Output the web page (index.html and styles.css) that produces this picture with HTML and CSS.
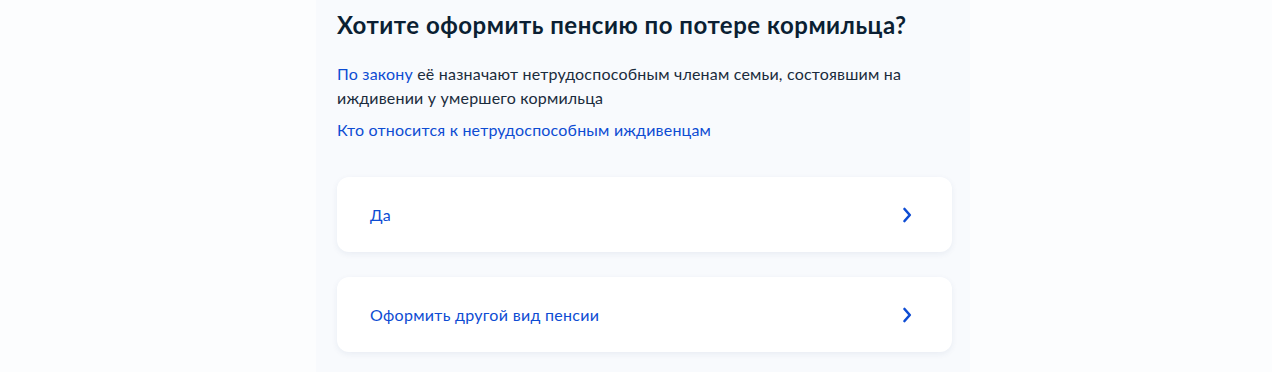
FILE: index.html
```html
<!DOCTYPE html>
<html lang="ru">
<head>
<meta charset="utf-8">
<link rel="stylesheet" href="styles.css">
</head>
<body>
<div class="page">
  <main class="column">
    <h1 class="title">Хотите оформить пенсию по потере кормильца?</h1>
    <p class="text"><a class="link" href="#">По закону</a> её назначают нетрудоспособным членам семьи, состоявшим на иждивении у умершего кормильца</p>
    <p class="text more"><a class="link" href="#">Кто относится к нетрудоспособным иждивенцам</a></p>
    <div class="options">
      <a class="card" href="#"><span class="card-label">Да</span>
        <svg class="chev" width="10" height="18" viewBox="0 0 10 18"><path d="M2.5 3 L7.8 9 L2.5 15" fill="none" stroke="#0d4cd3" stroke-width="2.6" stroke-linecap="round" stroke-linejoin="round"/></svg>
      </a>
      <a class="card" href="#"><span class="card-label">Оформить другой вид пенсии</span>
        <svg class="chev" width="10" height="18" viewBox="0 0 10 18"><path d="M2.5 3 L7.8 9 L2.5 15" fill="none" stroke="#0d4cd3" stroke-width="2.6" stroke-linecap="round" stroke-linejoin="round"/></svg>
      </a>
    </div>
  </main>
</div>
</body>
</html>
```
FILE: styles.css
```css
* { box-sizing: border-box; }
html, body { margin: 0; padding: 0; }
body {
  background: #fcfdfe;
  font-family: Lato, "Noto Sans", sans-serif;
  color: #0b1f33;
}
.page {
  display: flex;
  min-height: 372px;
}
.column {
  margin-left: 316px;
  width: 654px;
  padding: 9px 18px 0 21px;
  background: #f8fafd;
  min-height: 372px;
}
.title {
  margin: 0;
  font-size: 24px;
  line-height: 32px;
  font-weight: 700;
  letter-spacing: 0.5px;
  color: #0b1f33;
}
.text {
  margin: 21px 0 0;
  font-size: 16px;
  line-height: 24px;
  letter-spacing: 0.2px;
  width: 600px;
  color: #1a2b3c;
}
.text.more { margin-top: 8px; }
.link { color: #0d4cd3; text-decoration: none; }
.options {
  margin-top: 35px;
  display: flex;
  flex-direction: column;
  gap: 25px;
}
.card {
  display: flex;
  align-items: center;
  justify-content: space-between;
  height: 75px;
  padding: 0 40px 0 33px;
  background: #fff;
  border-radius: 12px;
  box-shadow: 0 2px 6px rgba(30, 60, 120, 0.07);
  text-decoration: none;
  color: #0d4cd3;
  font-size: 16px;
  letter-spacing: 0.3px;
}
.chev { display: block; }
```
